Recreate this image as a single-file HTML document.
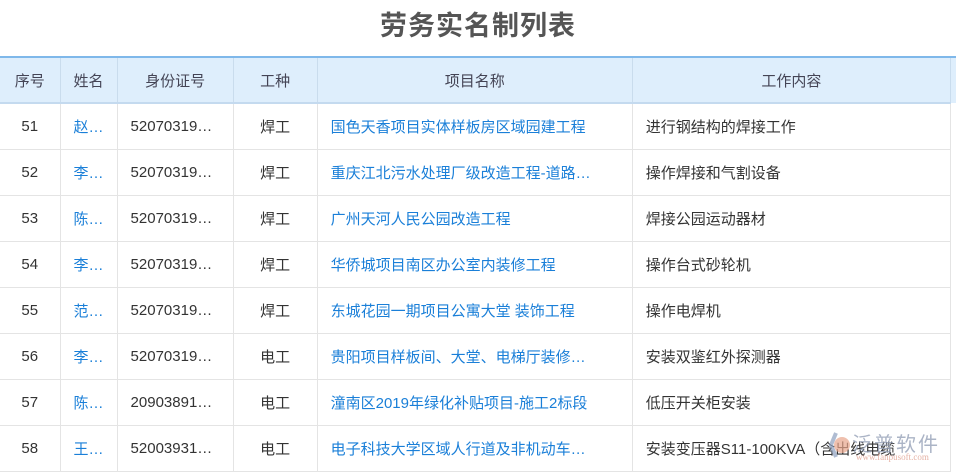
<!DOCTYPE html>
<html><head><meta charset="utf-8"><style>
body{margin:0;width:956px;height:474px;background:#fff;overflow:hidden;font-family:"Liberation Sans","Noto Sans CJK SC",sans-serif;position:relative}
h1{margin:0;position:absolute;top:8px;left:0;width:956px;text-align:center;font-size:27px;font-weight:bold;color:#555;letter-spacing:1px;line-height:36px}
.hb{position:absolute;left:0;top:56px;width:956px;height:47px;background:#deeefc;border-top:2px solid #7fb8ea;box-sizing:border-box}
table{position:absolute;top:56px;left:0;border-collapse:collapse;table-layout:fixed;width:951px;border-top:2px solid #7fb8ea}
td,th{height:45px;font-size:15px;padding:0 0 0 13px;white-space:nowrap;overflow:hidden;border-right:1px solid #e4e4e4;border-bottom:1px solid #e4e4e4;text-align:left;color:#333;font-weight:normal}
th{background:#deeefc;color:#445;text-align:center;padding:0;border-right:1px solid #c9dced;border-bottom:2px solid #c4daef;height:44px}
td.c{text-align:center;padding:0}
.b{color:#1a7fd8}
.wm{position:absolute;left:826px;top:428px}
</style></head><body>
<h1>劳务实名制列表</h1>
<div class="hb"></div>
<table>
<colgroup><col style="width:60px"><col style="width:57px"><col style="width:116px"><col style="width:84px"><col style="width:315px"><col style="width:318px"></colgroup>
<tr><th>序号</th><th>姓名</th><th>身份证号</th><th>工种</th><th>项目名称</th><th>工作内容</th></tr>
<tr><td class="c">51</td><td class="b">赵…</td><td>52070319…</td><td class="c">焊工</td><td class="b">国色天香项目实体样板房区域园建工程</td><td>进行钢结构的焊接工作</td></tr>
<tr><td class="c">52</td><td class="b">李…</td><td>52070319…</td><td class="c">焊工</td><td class="b">重庆江北污水处理厂级改造工程-道路…</td><td>操作焊接和气割设备</td></tr>
<tr><td class="c">53</td><td class="b">陈…</td><td>52070319…</td><td class="c">焊工</td><td class="b">广州天河人民公园改造工程</td><td>焊接公园运动器材</td></tr>
<tr><td class="c">54</td><td class="b">李…</td><td>52070319…</td><td class="c">焊工</td><td class="b">华侨城项目南区办公室内装修工程</td><td>操作台式砂轮机</td></tr>
<tr><td class="c">55</td><td class="b">范…</td><td>52070319…</td><td class="c">焊工</td><td class="b">东城花园一期项目公寓大堂 装饰工程</td><td>操作电焊机</td></tr>
<tr><td class="c">56</td><td class="b">李…</td><td>52070319…</td><td class="c">电工</td><td class="b">贵阳项目样板间、大堂、电梯厅装修…</td><td>安装双鉴红外探测器</td></tr>
<tr><td class="c">57</td><td class="b">陈…</td><td>20903891…</td><td class="c">电工</td><td class="b">潼南区2019年绿化补贴项目-施工2标段</td><td>低压开关柜安装</td></tr>
<tr><td class="c">58</td><td class="b">王…</td><td>52003931…</td><td class="c">电工</td><td class="b">电子科技大学区域人行道及非机动车…</td><td>安装变压器S11-100KVA（含出线电缆</td></tr>
</table>
<div class="wm">
<svg width="26" height="30" style="position:absolute;left:0;top:2px"><circle cx="16" cy="15" r="8" fill="#e8a58c" opacity=".7"/><path d="M10 3 L5 15 L10 27" stroke="#8da0bf" stroke-width="4" fill="none" opacity=".7"/></svg>
<div style="position:absolute;left:26px;top:0px;font-size:20px;color:#8f9bb3;opacity:.75;letter-spacing:2px;white-space:nowrap">泛普软件</div>
<div style="position:absolute;left:30px;top:24px;font-size:9px;color:#e0a090;opacity:.8;font-family:'Liberation Serif',serif;white-space:nowrap">www.fanpusoft.com</div>
</div>
</body></html>
